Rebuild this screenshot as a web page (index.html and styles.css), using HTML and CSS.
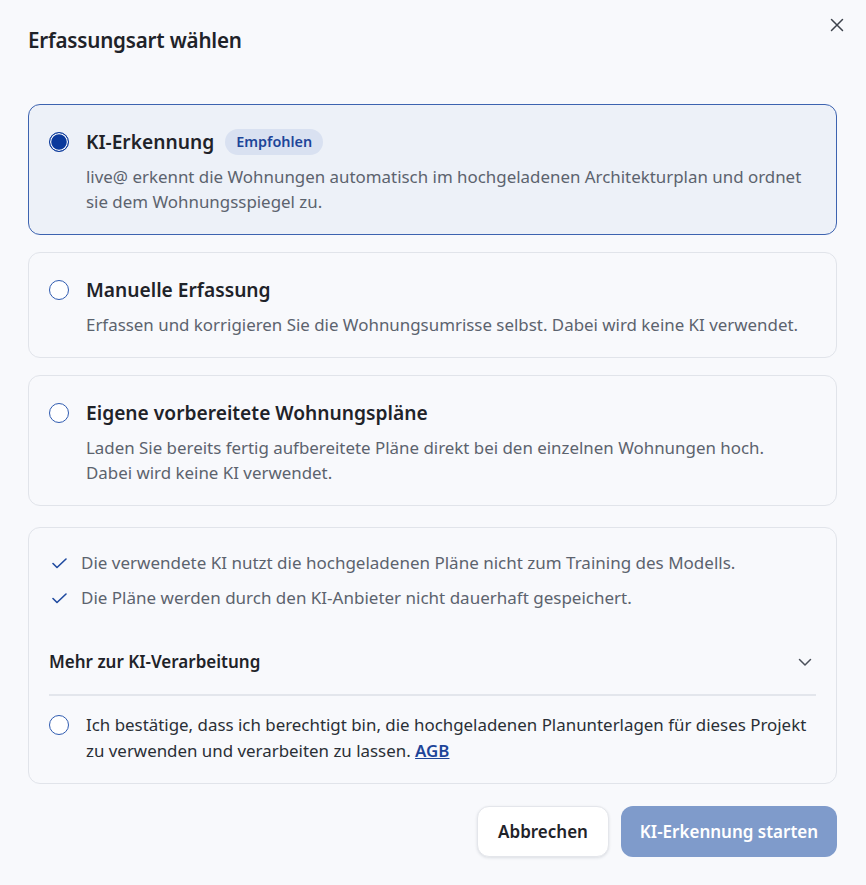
FILE: index.html
```html
<!DOCTYPE html>
<html lang="de">
<head>
<meta charset="utf-8">
<title>Erfassungsart wählen</title>
<link rel="stylesheet" href="styles.css">
</head>
<body>
<div class="dialog">
  <header class="dlg-head">
    <h1 class="dlg-title">Erfassungsart wählen</h1>
    <button class="close" aria-label="Schließen">
      <svg width="14" height="14" viewBox="0 0 14 14"><path d="M1.5 1.5 12.5 12.5M12.5 1.5 1.5 12.5" stroke="#3d434c" stroke-width="1.5" stroke-linecap="round" fill="none"/></svg>
    </button>
  </header>

  <div class="options">
    <div class="option selected">
      <span class="radio on"></span>
      <div class="opt-body">
        <div class="opt-title">KI-Erkennung <span class="pill">Empfohlen</span></div>
        <p class="opt-desc">live@ erkennt die Wohnungen automatisch im hochgeladenen Architekturplan und ordnet sie dem Wohnungsspiegel zu.</p>
      </div>
    </div>
    <div class="option">
      <span class="radio"></span>
      <div class="opt-body">
        <div class="opt-title">Manuelle Erfassung</div>
        <p class="opt-desc">Erfassen und korrigieren Sie die Wohnungsumrisse selbst. Dabei wird keine KI verwendet.</p>
      </div>
    </div>
    <div class="option">
      <span class="radio"></span>
      <div class="opt-body">
        <div class="opt-title">Eigene vorbereitete Wohnungspläne</div>
        <p class="opt-desc">Laden Sie bereits fertig aufbereitete Pläne direkt bei den einzelnen Wohnungen hoch. Dabei wird keine KI verwendet.</p>
      </div>
    </div>
  </div>

  <div class="info">
    <ul class="checks">
      <li><svg class="check" width="15" height="11" viewBox="0 0 15 11"><path d="M1 5.5 5 9.5 14 1" stroke="#1f4aa0" stroke-width="1.6" fill="none" stroke-linecap="round" stroke-linejoin="round"/></svg>Die verwendete KI nutzt die hochgeladenen Pläne nicht zum Training des Modells.</li>
      <li><svg class="check" width="15" height="11" viewBox="0 0 15 11"><path d="M1 5.5 5 9.5 14 1" stroke="#1f4aa0" stroke-width="1.6" fill="none" stroke-linecap="round" stroke-linejoin="round"/></svg>Die Pläne werden durch den KI-Anbieter nicht dauerhaft gespeichert.</li>
    </ul>
    <div class="acc-head">
      <span>Mehr zur KI-Verarbeitung</span>
      <svg width="14" height="9" viewBox="0 0 14 9"><path d="M1.5 1.5 7 7 12.5 1.5" stroke="#4a505a" stroke-width="1.5" fill="none" stroke-linecap="round" stroke-linejoin="round"/></svg>
    </div>
    <div class="confirm">
      <span class="radio"></span>
      <p>Ich bestätige, dass ich berechtigt bin, die hochgeladenen Planunterlagen für dieses Projekt zu verwenden und verarbeiten zu lassen. <a href="#">AGB</a></p>
    </div>
  </div>

  <footer class="actions">
    <button class="btn secondary">Abbrechen</button>
    <button class="btn primary">KI-Erkennung starten</button>
  </footer>
</div>
</body>
</html>
```

FILE: styles.css
```css
* { box-sizing: border-box; }
html, body { margin: 0; padding: 0; }
body {
  background: #f8f9fc;
  font-family: "Noto Sans", "Open Sans", sans-serif;
  color: #1f2329;
}
.dialog {
  padding: 25px 29px 28px 28px;
}
.dlg-head {
  display: flex;
  justify-content: space-between;
  align-items: flex-start;
}
.dlg-title {
  margin: 0;
  font-size: 20.6px;
  line-height: 30px;
  font-weight: 600;
  color: #1f2329;
  letter-spacing: -0.2px;
}
.close {
  border: 0;
  background: transparent;
  padding: 0;
  width: 14px;
  height: 14px;
  margin: -7px -7px 0 0;
  display: flex;
}
.options {
  margin-top: 49px;
  display: flex;
  flex-direction: column;
  gap: 17px;
}
.option {
  display: flex;
  gap: 17px;
  align-items: flex-start;
  background: #f8f9fc;
  border: 1px solid #e1e4ea;
  border-radius: 12px;
  padding: 22px 23px 20px 20px;
}
.option.selected {
  background: #edf1f8;
  border-color: #3d63b0;
}
.radio {
  flex: none;
  width: 20px;
  height: 20px;
  border-radius: 50%;
  border: 1.5px solid #2f5bb0;
  background: #fff;
  margin-top: 5px;
}
.radio.on {
  background: #0b3a9c;
  border: 1.5px solid #0b3a9c;
  box-shadow: inset 0 0 0 1.2px #fff;
}
.opt-body { flex: 1; }
.opt-title {
  font-size: 19.2px;
  line-height: 30px;
  font-weight: 600;
  color: #1f2329;
  display: flex;
  align-items: center;
  gap: 11px;
}
.pill {
  font-size: 14.4px;
  line-height: 26px;
  font-weight: 600;
  color: #1d4599;
  background: #d9e1f1;
  border-radius: 13px;
  padding: 0 11px;
}
.opt-desc {
  margin: 7px 0 0;
  font-size: 16.9px;
  line-height: 25px;
  color: #5c636e;
}
.info {
  margin-top: 21px;
  border: 1px solid #e1e4ea;
  border-radius: 12px;
  padding: 23px 20px 19px 20px;
}
.checks {
  list-style: none;
  margin: 0;
  padding: 0;
  display: flex;
  flex-direction: column;
  gap: 11px;
}
.checks li {
  display: flex;
  align-items: center;
  font-size: 17px;
  line-height: 24px;
  color: #5c636e;
}
.check {
  margin: 0 14px 0 3px;
  flex: none;
}
.acc-head {
  margin-top: 24px;
  padding: 16px 0 20px;
  display: flex;
  justify-content: space-between;
  align-items: center;
  font-size: 17px;
  line-height: 24px;
  font-weight: 600;
  color: #1f2329;
  border-bottom: 2px solid #e3e6ec;
}
.acc-head svg { margin-right: 4px; }
.confirm {
  padding-top: 16px;
  display: flex;
  gap: 17px;
  align-items: flex-start;
}
.confirm .radio { margin-top: 3px; }
.confirm p {
  margin: 0;
  font-size: 16.9px;
  line-height: 26px;
  color: #2a2f36;
}
.confirm a {
  color: #1d4599;
  font-weight: 600;
  text-decoration: underline;
}
.actions {
  margin-top: 22px;
  display: flex;
  justify-content: flex-end;
  gap: 12px;
}
.btn {
  font-family: inherit;
  height: 51px;
  border-radius: 12px;
  font-size: 17px;
  font-weight: 600;
  padding: 0 16px;
}
.btn.secondary {
  width: 132px;
  background: #fff;
  border: 1px solid #e4e6eb;
  color: #1f2329;
  box-shadow: 0 1px 3px rgba(20, 30, 50, 0.12);
}
.btn.primary {
  width: 216px;
  background: #7f9bcb;
  border: 0;
  color: #fff;
}
```
